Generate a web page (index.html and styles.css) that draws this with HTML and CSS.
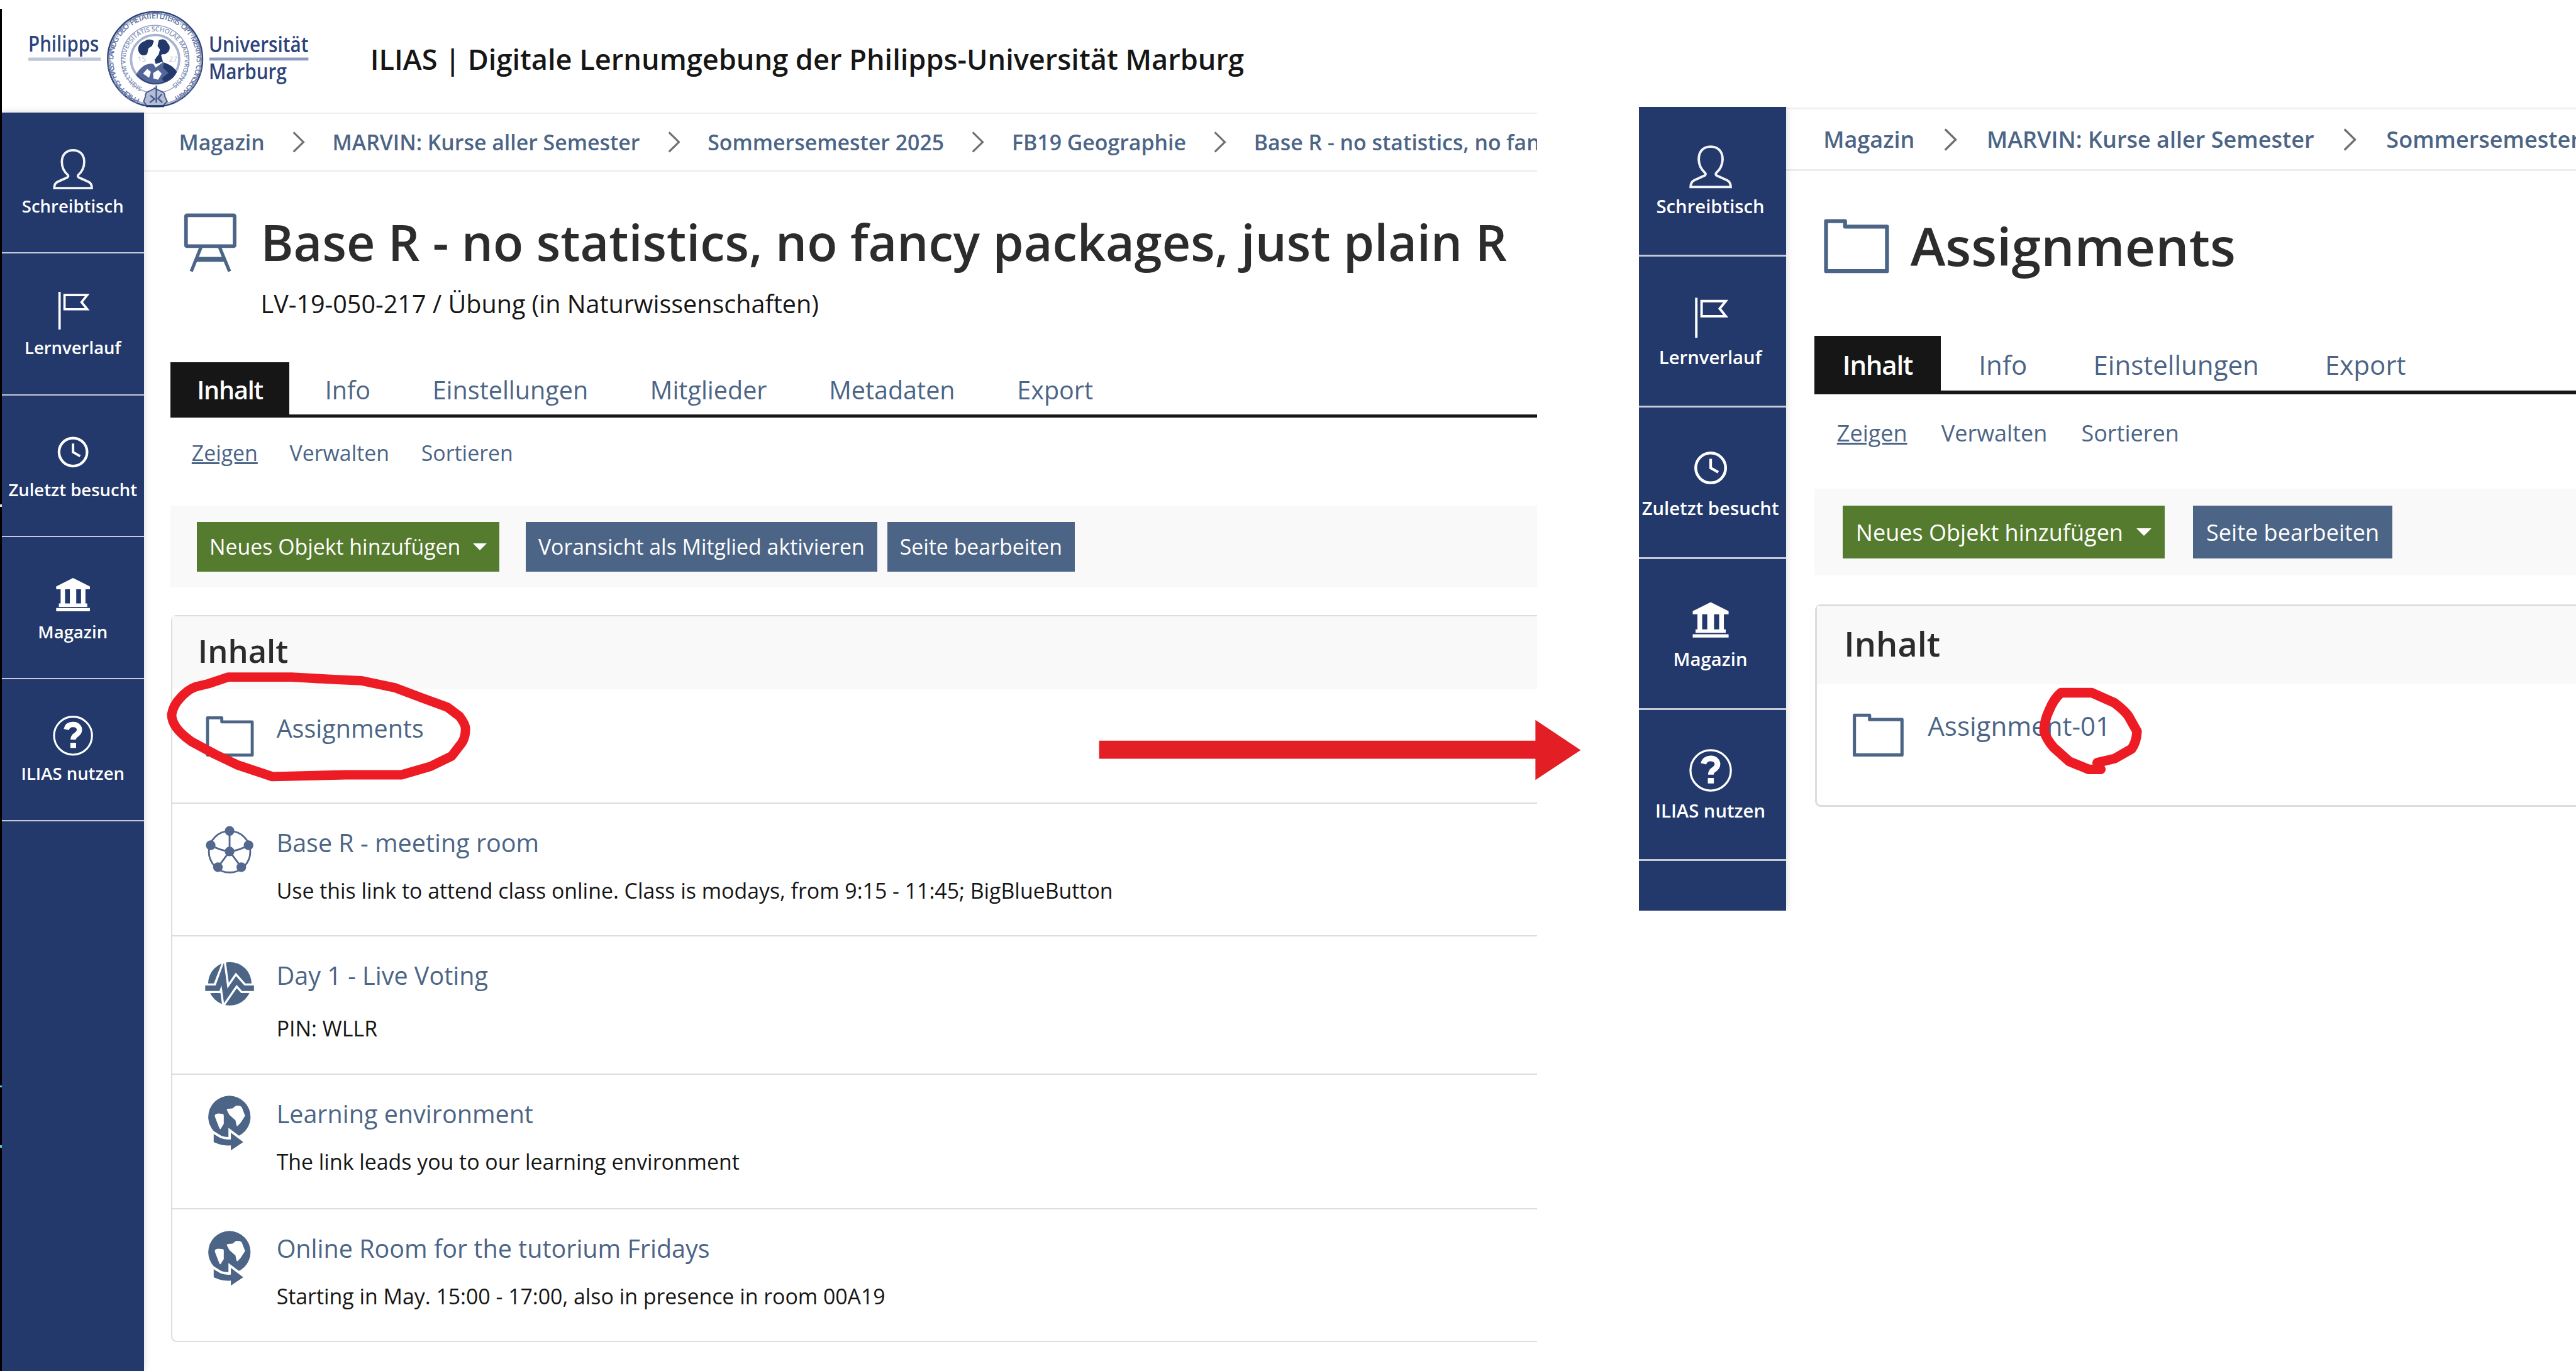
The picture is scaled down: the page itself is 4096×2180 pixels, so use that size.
FILE: index.html
```html
<!DOCTYPE html>
<html lang="de">
<head>
<meta charset="utf-8">
<title>ILIAS</title>
<link rel="stylesheet" href="styles.css">
</head>
<body>
<svg class="defs" width="0" height="0" aria-hidden="true">
  <symbol id="i-user" viewBox="0 3 32 24"><path d="M16 4.700c-4 0-6.300 2.700-6.300 6.600 0 3.100 1.300 5.500 3.300 7.300.5.5.3 1.200-.3 1.500l-5.300 2.400c-1.400.6-2 1.600-2 3.600h21.200c0-2-.6-3-2-3.600l-5.300-2.400c-.6-.3-.8-1-.3-1.500 2-1.800 3.300-4.200 3.300-7.300 0-3.900-2.300-6.600-6.300-6.600z" fill="none" stroke="#f2f4f8" stroke-width="1.300"/></symbol>
  <symbol id="i-flag" viewBox="0 3 32 24"><path d="M8.400 4.800V26" fill="none" stroke="#fff" stroke-width="1.300"/><path d="M11.200 6.600H24L20.800 10.600L24 14.600H11.200Z" fill="none" stroke="#fff" stroke-width="1.300"/></symbol>
  <symbol id="i-clock" viewBox="0 3 32 24"><circle cx="16" cy="15" r="7.900" fill="none" stroke="#fff" stroke-width="1.500"/><path d="M16 10.200V15L20 17.300" fill="none" stroke="#fff" stroke-width="1.400"/></symbol>
  <symbol id="i-museum" viewBox="0 3 32 24"><path d="M16 5.800L25.500 10.600V12.200H6.500V10.600ZM9 12.200h2.500v8H9zM14.200 12.200h3.600v8h-3.600zM20.500 12.200H23v8h-2.500zM8 20.200h16v1.900H8zM6.500 22.800h19v1.800h-19z" fill="#fff"/></symbol>
  <symbol id="i-help" viewBox="0 3 32 24"><circle cx="16" cy="15" r="10.700" fill="none" stroke="#fff" stroke-width="1.100"/><path d="M12.200 11.500c.5-2 2-2.900 4-2.800 2.200.1 3.400 1.400 3.400 3 0 1.500-.9 2.200-2.100 3-1 .7-1.400 1.200-1.400 2.500" fill="none" stroke="#fff" stroke-width="3"/><rect x="14.500" y="19" width="3.200" height="2.900" fill="#fff"/></symbol>
  <symbol id="i-folder" viewBox="0 0 94 94"><path d="M10.400 13.900H34V20.700H84.400V75.700H10.400Z" fill="none" stroke="#4c6586" stroke-width="5" stroke-linejoin="round"/></symbol>
  <symbol id="i-net" viewBox="0 0 94 94"><g fill="none" stroke="#53678f" stroke-width="3"><circle cx="46.900" cy="46.200" r="34.300"/><path d="M46.900 11.700V45.700L27.600 71.700M46.900 45.700L66.300 71.700M15.600 35.400Q31 44 46.900 45.700Q63 44 78.300 35.400"/></g><g fill="#53678f"><circle cx="46.900" cy="11.700" r="8"/><circle cx="15.600" cy="35.400" r="8"/><circle cx="78.300" cy="35.400" r="8"/><circle cx="46.900" cy="45.700" r="8"/><circle cx="27.600" cy="71.700" r="8"/><circle cx="66.300" cy="71.700" r="8"/></g></symbol>
  <symbol id="i-vote" viewBox="0 0 94 94"><circle cx="47.300" cy="45" r="36" fill="#4c6586"/><g fill="none" stroke-miterlimit="12"><path d="M4 52.400H26.500L35.500 29L40.500 65L58 39.500L69.500 52.400H90" stroke="#fff" stroke-width="16"/><path d="M6.600 52.400H27L35.500 29L40.500 65L58 39.500L69.500 52.400H87.300" stroke="#4c6586" stroke-width="9"/></g></symbol>
  <symbol id="i-web" viewBox="0 0 94 94"><circle cx="46.600" cy="36.400" r="35" fill="#4c6586"/><path d="M22.600 33Q24 31 28.300 30.700L36 31.500Q37.500 32 37.300 36V48L32 56.400Q30.500 57 29.500 54L22.600 36ZM42.300 25Q42 23 45 22.800L51.600 22.400L57 18.300Q63 16.500 67 20L72.600 34.700L65 46.400L60 51.500Q58.300 52 58 49L56.600 42L46.600 33Z" fill="#fff"/><path d="M20.600 64.700L31.600 71.400Q39 74.500 49 73.700V62.500L69.500 78L49 92V83.500Q37 84.500 29 81.500L20.600 78Z" fill="#4c6586" stroke="#fff" stroke-width="8" paint-order="stroke"/></symbol>
</svg>

<div class="stage">
  <div class="edge"><i class="tick tick-a"></i><i class="tick tick-b"></i><i class="tick tick-c"></i></div>
  <div class="app course">
    <header class="topbar">
      <svg class="logo" viewBox="0 0 540 187">
        <defs>
          <path id="ring-a" d="M232 164A69 69 0 1 1 284 163"/>
          <path id="ring-b" d="M236 145A49 49 0 1 1 280 144"/>
        </defs>
        <g class="logo-text">
          <text x="47" y="85.500" textLength="117" lengthAdjust="spacingAndGlyphs">Philipps</text>
          <text x="346" y="86.500" textLength="165" lengthAdjust="spacingAndGlyphs">Universität</text>
          <text x="346" y="131.500" textLength="129" lengthAdjust="spacingAndGlyphs">Marburg</text>
        </g>
        <path d="M47 98H167" stroke="#c0c6da" stroke-width="5.500"/>
        <path d="M347 97.800H511" stroke="#8e9bbf" stroke-width="5"/>
        <circle cx="257" cy="98" r="78.500" fill="#fff" stroke="#2c4379" stroke-width="2.600"/>
        <circle cx="257" cy="98" r="75.500" fill="none" stroke="#a3adca" stroke-width="2.500"/>
        <circle cx="257" cy="98" r="56" fill="none" stroke="#98a4c4" stroke-width="1.600"/>
        <circle cx="257" cy="98" r="40" fill="none" stroke="#aab3cf" stroke-width="4"/>
        <text class="seal-a"><textPath href="#ring-a" textLength="376">PHILIPPVS · HASS · LANDG · DEO · PIETATI ET LITERIS · OPT · MERITVS · CONSECRAVIT</textPath></text>
        <text class="seal-b"><textPath href="#ring-b" textLength="256">SIGILLVM VNIVERSITATIS SCHOLAE MARPVRGENSIS</textPath></text>
        <g fill="#23386b">
          <path d="M229 83C228 74 235 70 240 68C244 64 252 65 255 68L252 76L246 80L244 89C239 94 231 92 229 83Z"/>
          <path d="M263 67C269 63 276 66 278 72C283 76 282 85 276 88C272 92 268 88 267 92L270 102L258 106L256 99L263 90L265 82L261 76Z"/>
          <path d="M226 123C234 108 246 104 254 106L258 112L270 103C281 107 288 113 293 119C288 131 272 140 257 139C243 138 231 132 226 123Z" fill="#52669a"/>
          <path d="M272 104C283 107 289 113 293 119C289 128 281 135 272 136L268 130L279 121L270 112Z"/>
        </g>
        <path d="M237 122L244 114L250 119L247 129ZM254 121L262 116L268 122L262 132L254 130ZM249 80L258 84L258 98L250 94Z" fill="#fff"/>
        <path d="M226 123C234 133 246 139 257 139C272 139 284 132 290 123" fill="none" stroke="#2c4379" stroke-width="2"/>
        <path d="M241 160C240 150 250 152 256 146C264 152 274 150 273 160L277 168L270 175H243L238 168Z" fill="#b5bdd5" stroke="#445a8c" stroke-width="2"/>
        <path d="M259 142V170M249 158L256 164L248 170M268 156L262 163L269 170" fill="none" stroke="#445a8c" stroke-width="2.500"/>
        <g class="seal-year"><text x="228" y="102">15</text><text x="280" y="102">27</text></g>
        <path d="M242 176H272" stroke="#23386b" stroke-width="3"/>
      </svg>
      <div class="site-title">ILIAS | Digitale Lernumgebung der Philipps-Universität Marburg</div>
    </header>
    <div class="body">
      <nav class="sidebar">
        <a class="side-item"><svg><use href="#i-user"/></svg><span>Schreibtisch</span></a>
        <a class="side-item"><svg><use href="#i-flag"/></svg><span>Lernverlauf</span></a>
        <a class="side-item"><svg><use href="#i-clock"/></svg><span>Zuletzt besucht</span></a>
        <a class="side-item"><svg><use href="#i-museum"/></svg><span>Magazin</span></a>
        <a class="side-item"><svg><use href="#i-help"/></svg><span>ILIAS nutzen</span></a>
      </nav>
      <main class="main">
        <div class="crumbs">
          <a>Magazin</a><svg viewBox="0 0 7 12"><path d="M.6.5L6.200 6L.6 11.500"/></svg>
          <a>MARVIN: Kurse aller Semester</a><svg viewBox="0 0 7 12"><path d="M.6.5L6.200 6L.6 11.500"/></svg>
          <a>Sommersemester 2025</a><svg viewBox="0 0 7 12"><path d="M.6.5L6.200 6L.6 11.500"/></svg>
          <a>FB19 Geographie</a><svg viewBox="0 0 7 12"><path d="M.6.5L6.200 6L.6 11.500"/></svg>
          <a>Base R - no statistics, no fancy packages, just plain R</a>
        </div>
        <div class="head with-sub">
          <svg class="head-icon" viewBox="0 0 117.600 117.600"><g transform="translate(15.700 9.900)" fill="none" stroke="#4c6586"><rect x="2.800" y="3" width="80.500" height="51" rx="1.500" stroke-width="6"/><path d="M27.500 56L11.500 96M58.500 56L75 96" stroke-width="5.500"/><path d="M19 76H67" stroke-width="8"/></g></svg>
          <div class="head-text">
            <h1>Base R - no statistics, no fancy packages, just plain R</h1>
            <p>LV-19-050-217 / Übung (in Naturwissenschaften)</p>
          </div>
        </div>
        <div class="tabs">
          <a class="active">Inhalt</a><a>Info</a><a>Einstellungen</a><a>Mitglieder</a><a>Metadaten</a><a>Export</a>
        </div>
        <div class="subtabs"><a class="active">Zeigen</a><a>Verwalten</a><a>Sortieren</a></div>
        <div class="toolbar">
          <a class="btn add">Neues Objekt hinzufügen<i class="caret"></i></a>
          <a class="btn">Voransicht als Mitglied aktivieren</a>
          <a class="btn last">Seite bearbeiten</a>
        </div>
        <section class="panel">
          <h2>Inhalt</h2>
          <div class="row"><svg><use href="#i-folder"/></svg><div><h3>Assignments</h3></div></div>
          <div class="row r2"><svg><use href="#i-net"/></svg><div><h3>Base R - meeting room</h3><p>Use this link to attend class online. Class is modays, from 9:15 - 11:45; BigBlueButton</p></div></div>
          <div class="row r3"><svg><use href="#i-vote"/></svg><div><h3>Day 1 - Live Voting</h3><p>PIN: WLLR</p></div></div>
          <div class="row r4"><svg><use href="#i-web"/></svg><div><h3>Learning environment</h3><p>The link leads you to our learning environment</p></div></div>
          <div class="row r5"><svg><use href="#i-web"/></svg><div><h3>Online Room for the tutorium Fridays</h3><p>Starting in May. 15:00 - 17:00, also in presence in room 00A19</p></div></div>
        </section>
      </main>
    </div>
  </div>
  <div class="app folder">
    <div class="body">
      <nav class="sidebar">
        <a class="side-item"><svg><use href="#i-user"/></svg><span>Schreibtisch</span></a>
        <a class="side-item"><svg><use href="#i-flag"/></svg><span>Lernverlauf</span></a>
        <a class="side-item"><svg><use href="#i-clock"/></svg><span>Zuletzt besucht</span></a>
        <a class="side-item"><svg><use href="#i-museum"/></svg><span>Magazin</span></a>
        <a class="side-item"><svg><use href="#i-help"/></svg><span>ILIAS nutzen</span></a>
      </nav>
      <main class="main">
        <div class="crumbs">
          <a>Magazin</a><svg viewBox="0 0 7 12"><path d="M.6.5L6.200 6L.6 11.500"/></svg>
          <a>MARVIN: Kurse aller Semester</a><svg viewBox="0 0 7 12"><path d="M.6.5L6.200 6L.6 11.500"/></svg>
          <a>Sommersemester 2025</a>
        </div>
        <div class="head">
          <svg class="head-icon" viewBox="0 0 125.200 125.200"><path d="M12 20.400H43.500V29.500H113V103.400H12Z" fill="none" stroke="#4c6586" stroke-width="6.500" stroke-linejoin="round"/></svg>
          <div class="head-text"><h1>Assignments</h1></div>
        </div>
        <div class="tabs">
          <a class="active">Inhalt</a><a>Info</a><a>Einstellungen</a><a>Export</a>
        </div>
        <div class="subtabs"><a class="active">Zeigen</a><a>Verwalten</a><a>Sortieren</a></div>
        <div class="toolbar">
          <a class="btn add">Neues Objekt hinzufügen<i class="caret"></i></a>
          <a class="btn last">Seite bearbeiten</a>
        </div>
        <section class="panel">
          <h2>Inhalt</h2>
          <div class="row"><svg><use href="#i-folder"/></svg><div><h3>Assignment-01</h3></div></div>
        </section>
      </main>
    </div>
  </div>
  <svg class="marks" viewBox="0 0 4268 2272">
    <g fill="none" stroke="#ed1c24" stroke-linejoin="round">
      <path stroke-width="15.500" d="M378 1122H483L553 1126L598 1128L655 1140L700 1157L741 1172L761 1187Q771 1200 771 1208Q771 1222 765 1231L748 1253L713 1270L665 1284H573L451 1287L394 1268L356 1250L317 1229Q300 1217 292 1206Q284 1195 284 1184Q287 1168 298 1157Q310 1143 324 1138L345 1133Z"/>
      <path stroke-width="16" d="M3415 1148H3466L3504 1165Q3521 1178 3527 1187L3541 1212Q3540 1230 3532 1241L3504 1257L3475 1264L3481 1275H3461L3429 1262L3403 1239Q3391 1225 3387 1212Q3387 1195 3395 1178Q3403 1158 3415 1148Z"/>
    </g>
    <path fill="#e31e25" d="M1821 1227.500H2544V1193L2619 1243L2544 1292.500V1257.500H1821Z"/>
  </svg>
</div>
</body>
</html>
```
FILE: styles.css
```css
/* --r: one unit of the 4268-wide drawing; --u: one interface pixel of an app */
:root { --r: calc(4096px / 4268); }
* { box-sizing: border-box; }
body { margin: 0; background: #fff; font-family: "Open Sans", "Noto Sans", sans-serif; color: #161616; }
h1, h2, h3, p { margin: 0; }
.defs { position: absolute; }
.stage { position: relative; display: flex; align-items: flex-start; width: 4096px; height: 2180px; overflow: hidden; }

.edge { width: calc(var(--r) * 3); height: calc(var(--r) * 2257); margin-top: calc(var(--r) * 15); background: #000; display: flex; flex-direction: column; flex: none; }
.tick { height: calc(var(--r) * 4); background: #63c3dd; }
.tick-a { margin-top: calc(var(--r) * 821); background: #ddd; }
.tick-b { margin-top: calc(var(--r) * 958); }
.tick-c { margin-top: calc(var(--r) * 96); }

.app { display: flex; flex-direction: column; overflow: hidden; flex: none; }
.course { --u: calc(var(--r) * 2.94); width: calc(var(--r) * 2544); height: 2180px; }
.folder { --u: calc(var(--r) * 3.13); width: calc(var(--r) * 1553); height: calc(var(--r) * 1331.6); margin: calc(var(--r) * 177) 0 0 calc(var(--r) * 168); }

.topbar { display: flex; height: calc(var(--r) * 186.7); flex: none; }
.logo { width: calc(var(--r) * 540); height: calc(var(--r) * 187); margin-left: calc(var(--r) * -3); flex: none; }
.logo-text { font-size: 36px; font-weight: 600; fill: #2d437a; }
.seal-a { font-size: 13px; font-weight: 600; fill: #6375a3; }
.seal-b { font-size: 11px; font-weight: 600; fill: #8491b6; }
.seal-year { font-size: 12px; fill: #b5bdd5; }
.site-title { padding-left: calc(var(--r) * 73.500); font-size: calc(var(--r) * 47.040); line-height: calc(var(--r) * 70); padding-top: calc(var(--r) * 62.500); font-weight: 600; white-space: nowrap; }

.body { display: flex; flex: 1; min-height: 0; }
.sidebar { width: calc(var(--u) * 80); flex: none; background: #23386b; box-shadow: 0 0 calc(var(--u) * 4) rgba(0,0,0,.16); position: relative; }
.folder .sidebar { margin-left: calc(var(--r) * -6.400); }
.side-item { display: flex; flex-direction: column; align-items: center; height: calc(var(--u) * 80); padding-top: calc(var(--u) * 20); border-bottom: calc(var(--u) * 1) solid #c5cad6; color: #fff; }
.side-item:first-child { height: calc(var(--u) * 79.300); padding-top: calc(var(--u) * 19.300); }
.side-item svg { width: calc(var(--u) * 32); height: calc(var(--u) * 24); flex: none; }
.side-item span { font-size: calc(var(--u) * 9.750); line-height: calc(var(--u) * 14); margin-top: calc(var(--u) * 2.200); font-weight: 600; white-space: nowrap; }

.main { flex: 1; min-width: 0; }
.folder .main { padding-top: calc(var(--r) * 1.600); }
.crumbs { display: flex; align-items: center; gap: calc(var(--u) * 15.600); height: calc(var(--u) * 33.400); padding-left: calc(var(--u) * 19.800); border-top: calc(var(--u) * 1) solid #f0f0f0; border-bottom: calc(var(--u) * 1) solid #ececec; font-size: calc(var(--u) * 12); line-height: calc(var(--u) * 31); font-weight: 600; color: #4c6586; white-space: nowrap; }
.crumbs a { flex: none; }
.crumbs svg { width: calc(var(--u) * 7); height: calc(var(--u) * 12); flex: none; fill: none; stroke: #6f6f6f; stroke-width: 1.100; }

.head { display: flex; padding: calc(var(--u) * 23.700) 0 calc(var(--u) * 31.500) calc(var(--u) * 17.500); }
.head.with-sub { padding-bottom: calc(var(--u) * 22.700); }
.head-icon { width: calc(var(--u) * 40); height: calc(var(--u) * 40); margin: calc(var(--u) * -3.500) 0 calc(var(--u) * -10) 0; flex: none; }
.head-text { padding-left: calc(var(--u) * 8.400); white-space: nowrap; }
.head h1 { font-size: calc(var(--u) * 28); line-height: calc(var(--u) * 32); font-weight: 600; color: #2c2c2c; }
.head p { margin-top: calc(var(--u) * 8.800); font-size: calc(var(--u) * 14); line-height: calc(var(--u) * 20); }

.tabs { display: flex; gap: calc(var(--u) * 5); margin-left: calc(var(--u) * 15); height: calc(var(--u) * 31.200); border-bottom: calc(var(--u) * 2) solid #161616; font-size: calc(var(--u) * 14); line-height: calc(var(--u) * 20); color: #4c6586; }
.tabs a { padding: calc(var(--u) * 5.600) calc(var(--u) * 15) 0; }
.tabs .active { background: #161616; color: #fff; font-weight: 600; letter-spacing: calc(var(--u) * -.42); }
.subtabs { display: flex; gap: calc(var(--u) * 18); margin-left: calc(var(--u) * 27); padding-top: calc(var(--u) * 11.700); height: calc(var(--u) * 49.800); font-size: calc(var(--u) * 12); line-height: calc(var(--u) * 17); color: #4c6586; }
.subtabs .active { text-decoration: underline; }

.toolbar { display: flex; align-items: center; margin-left: calc(var(--u) * 15); padding-left: calc(var(--u) * 15); height: calc(var(--u) * 45.800); background: #f9f9f9; }
.btn { display: flex; align-items: center; height: calc(var(--u) * 28); padding: 0 calc(var(--u) * 7); background: #4c6586; color: #fff; font-size: calc(var(--u) * 12); line-height: calc(var(--u) * 28); white-space: nowrap; }
.btn.add { background: #557b2e; margin-right: calc(var(--u) * 15); }
.btn + .btn:not(.add) + .btn { margin-left: calc(var(--u) * 5.800); }
.caret { width: 0; height: 0; border: calc(var(--u) * 4) solid transparent; border-top-color: #fff; border-bottom: 0; margin-left: calc(var(--u) * 7); }

.panel { margin: calc(var(--u) * 15.600) 0 0 calc(var(--u) * 15.300); border: calc(var(--u) * 1) solid #dddddd; border-right: 0; border-radius: calc(var(--u) * 3) 0 0 calc(var(--u) * 3); }
.panel h2 { height: calc(var(--u) * 41.200); padding: calc(var(--u) * 7.700) 0 0 calc(var(--u) * 14.500); background: #f9f9f9; font-size: calc(var(--u) * 18); line-height: calc(var(--u) * 24); font-weight: 600; color: #2c2c2c; }
.row { display: flex; height: calc(var(--u) * 63.800); padding: calc(var(--u) * 11.500) 0 0 calc(var(--u) * 16.500); white-space: nowrap; }
.row + .row { border-top: calc(var(--u) * 1) solid #dddddd; }
.row svg { width: calc(var(--u) * 32); height: calc(var(--u) * 32); flex: none; }
.row > div { padding: calc(var(--u) * .5) 0 0 calc(var(--u) * 10.300); }
.row h3 { font-size: calc(var(--u) * 14); line-height: calc(var(--u) * 20); font-weight: 400; color: #4c6586; }
.row p { margin-top: calc(var(--u) * 8); font-size: calc(var(--u) * 12); line-height: calc(var(--u) * 18); }
.row.r2 { height: calc(var(--u) * 74.800); }
.row.r3 { height: calc(var(--u) * 78); }
.row.r3 p { margin-top: calc(var(--u) * 10.800); }
.row.r4 { height: calc(var(--u) * 76); }
.row.r5 { height: calc(var(--u) * 74.800); }

.marks { position: absolute; inset: 0; width: 4096px; height: 2180px; }
```
